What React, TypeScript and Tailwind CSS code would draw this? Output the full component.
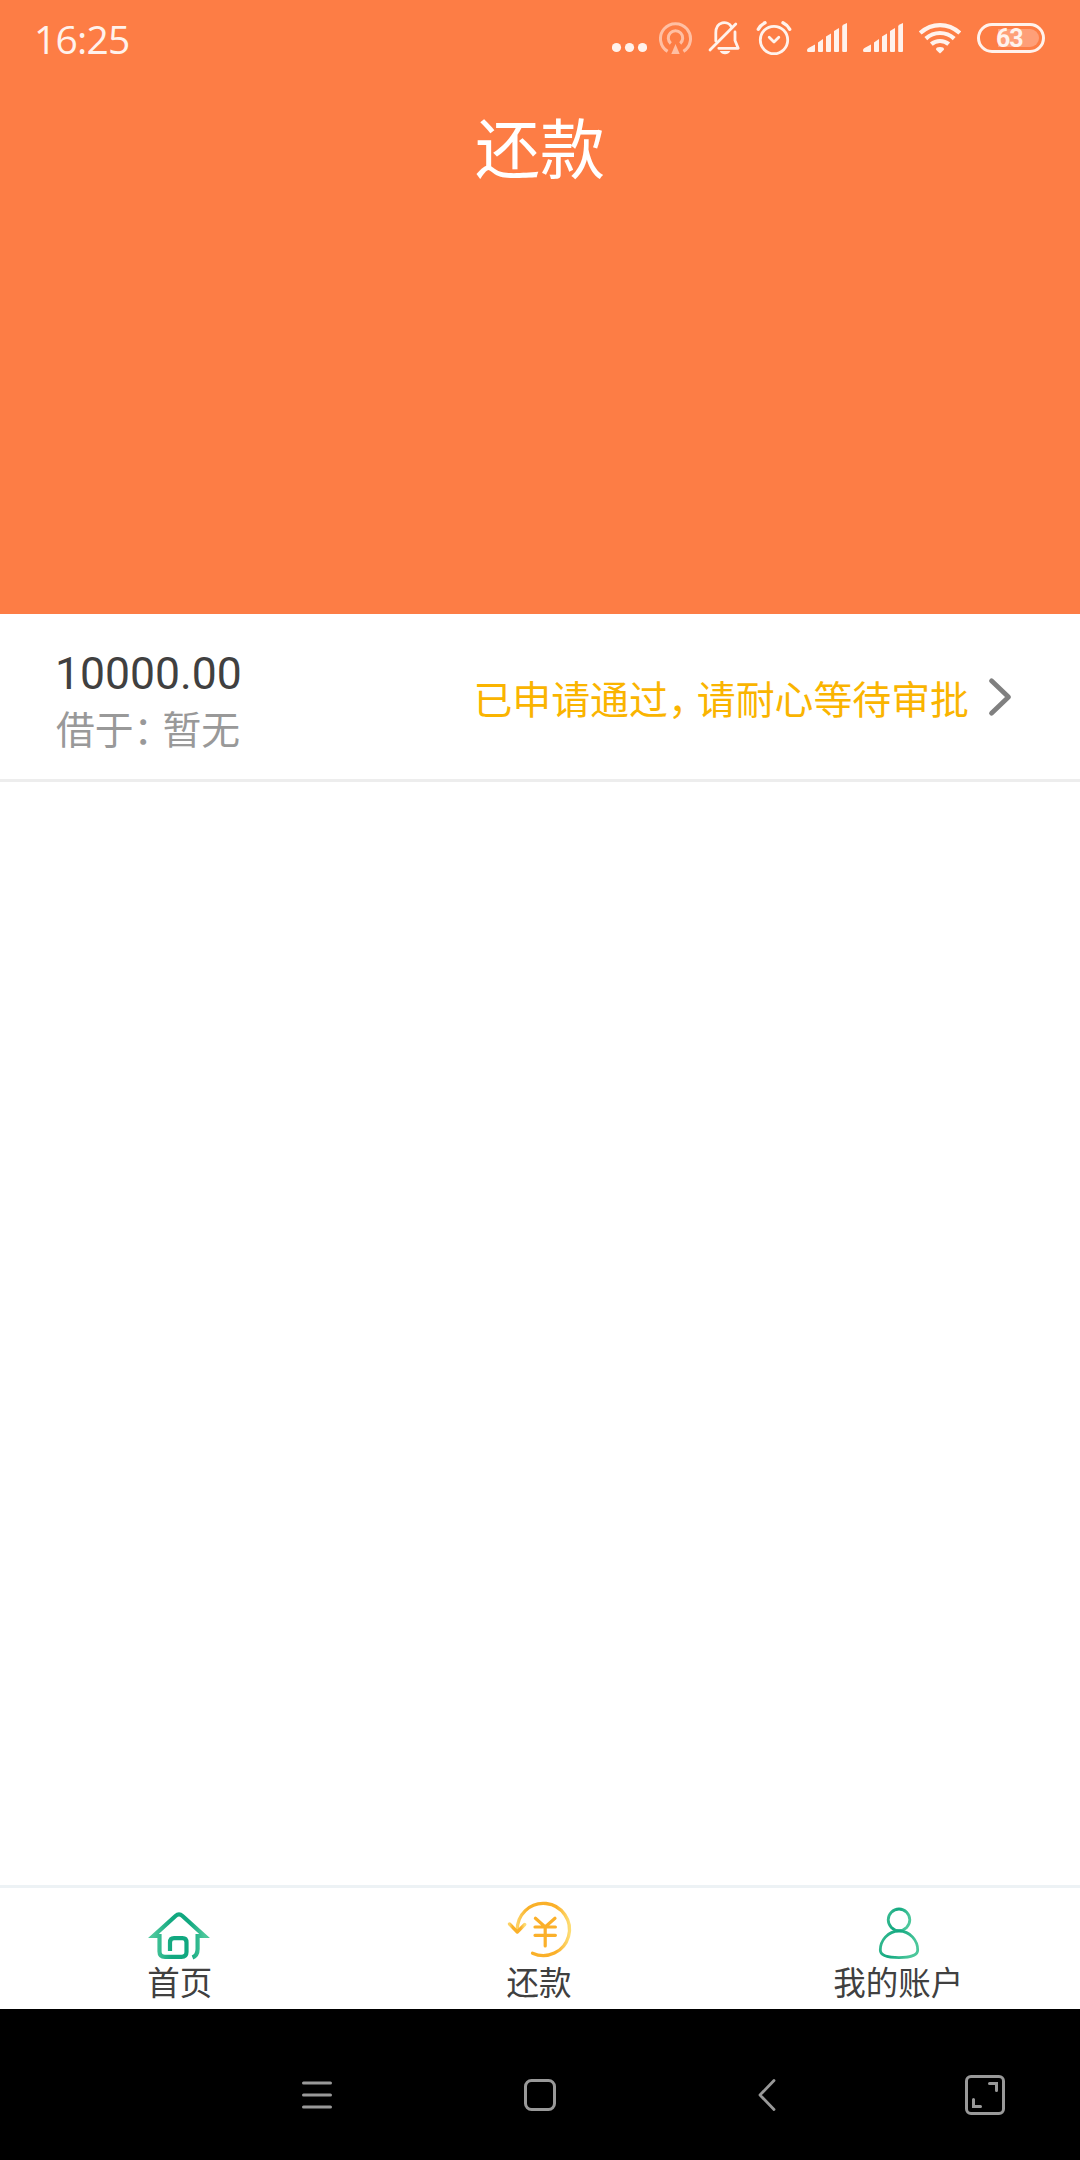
import type { ReactNode } from 'react'

interface IconProps {
  width: number
  children: ReactNode
  className?: string
}

// Status icons share the full bar height so they keep one baseline
function StatusIcon({ width, children, className }: IconProps) {
  return (
    <svg width={width} height={76} viewBox={`0 0 ${width} 76`} fill="none" className={className}>
      {children}
    </svg>
  )
}

function Signal({ className }: { className?: string }) {
  return (
    <StatusIcon width={40} className={className}>
      <g fill="#fff2ec">
        <path d="M0 50.5 Q0 48.8 1.5 48 L8 44.5 V51 Q8 52 7 52 H1.5 Q0 52 0 50.5Z" />
        <path d="M11 42.4 L16 39 V51 Q16 52 15 52 H12 Q11 52 11 51Z" />
        <path d="M19 36.4 L24 33.5 V51 Q24 52 23 52 H20 Q19 52 19 51Z" />
        <path d="M27 31 L32 28 V51 Q32 52 31 52 H28 Q27 52 27 51Z" />
        <path d="M35.2 25.8 Q37 24 40 23 V51 Q40 52 39 52 H36.2 Q35.2 52 35.2 51Z" />
      </g>
    </StatusIcon>
  )
}

function StatusBar() {
  return (
    <div className="flex h-[76px] items-center pl-[34px] pr-[35px]">
      <span className="pt-[2px] font-['Open_Sans',sans-serif] text-[39px] font-normal leading-[76px] tracking-[-0.8px] text-[#fff2ec]">
        16:25
      </span>
      <div className="ml-auto flex">
        <StatusIcon width={35}>
          <g fill="#fff2ec">
            <circle cx="4.5" cy="47.5" r="4.6" />
            <circle cx="17.5" cy="47.5" r="4.6" />
            <circle cx="30.5" cy="47.5" r="4.6" />
          </g>
        </StatusIcon>
        <StatusIcon width={34} className="ml-[12px]">
          <g stroke="#ffbfa3" strokeWidth="3">
            <path d="M8.6 51.4 A15 15 0 1 1 24.4 51.4" />
            <path d="M11.8 43.5 A7.2 7.2 0 1 1 21.2 43.5" />
          </g>
          <path d="M16.5 44 L20.7 54 H12.3Z" fill="#ffbfa3" />
        </StatusIcon>
        <StatusIcon width={33} className="ml-[15px]">
          <g stroke="#fff2ec" strokeWidth="2.8" strokeLinecap="round" strokeLinejoin="round">
            <path d="M2 50 L27.8 24" />
            <path d="M7.8 41 V33 C7.8 20.5 20 20.5 23.2 26.5" />
            <path d="M27 32 V40.5 L30.2 48.3 H10.8" />
          </g>
          <path d="M11.7 51 H22.3 Q20.5 54.2 17 54.2 T11.7 51Z" fill="#fff2ec" />
        </StatusIcon>
        <StatusIcon width={36} className="ml-[15px]">
          <g stroke="#fff2ec" strokeLinecap="round" strokeLinejoin="round">
            <circle cx="18" cy="40" r="13.7" strokeWidth="2.8" />
            <path d="M2.3 29.3 Q4.5 25 9 22.8 M27 22.8 Q31.5 25 33.7 29.3" strokeWidth="3.4" />
            <path d="M13.2 37.2 L18 42 L22.8 37.2" strokeWidth="2.8" />
          </g>
        </StatusIcon>
        <Signal className="ml-[15px]" />
        <Signal className="ml-[16px]" />
        <StatusIcon width={42} className="ml-[16px]">
          <g stroke="#fff2ec" strokeWidth="4.2">
            <path d="M1.2 33 Q10 25.1 21 25.1 T40.8 33" />
            <path d="M6.8 38.6 Q13 33 21 33 T35.2 38.6" />
            <path d="M12.3 44.2 Q16 41 21 41 T29.7 44.2" />
          </g>
          <path d="M17 49.4 Q17 47 21 47 T25 49.4 Q24.8 50 21 53.4 Q17.2 50 17 49.4Z" fill="#fff2ec" />
        </StatusIcon>
        <StatusIcon width={68} className="ml-[16px]">
          <path d="M21 29 H53 A9 9 0 0 1 53 47 H21Z" fill="#fe9f78" />
          <rect x="1.5" y="24.5" width="65" height="27" rx="13.5" stroke="#fff2ec" strokeWidth="3" />
          <text
            x="32.3"
            y="46.8"
            textAnchor="middle"
            fill="#fff2ec"
            className="font-[Roboto,sans-serif] text-[25px] font-bold tracking-[-1px]"
          >
            63
          </text>
        </StatusIcon>
      </div>
    </div>
  )
}

function HomeIcon() {
  return (
    <svg width="64" height="60" viewBox="0 0 64 60" fill="none">
      <defs>
        <linearGradient id="home" x1="0" y1="0.7" x2="1" y2="0.7">
          <stop offset="0" stopColor="#4cc79b" />
          <stop offset="0.35" stopColor="#12a880" />
          <stop offset="0.7" stopColor="#10a880" />
          <stop offset="1" stopColor="#4cc79b" />
        </linearGradient>
      </defs>
      <path
        d="M22 44 V35.5 Q22 31.2 26 31.2 H34.5 Q38.5 31.2 38.5 35.5 V45 Q38.5 49.8 33.5 49.8 H17 Q11.5 49.8 11.5 44.5 V29 H5.5 L27.5 9 Q31 5.8 34.5 9 L56.5 29 H49.6 V42 Q49.6 48.5 44.5 50.5"
        stroke="url(#home)"
        strokeWidth="4.2"
        strokeMiterlimit="8"
      />
    </svg>
  )
}

function RepayIcon() {
  return (
    <svg width="64" height="60" viewBox="0 0 64 60" fill="none">
      <defs>
        <linearGradient id="repay" x1="0" y1="0" x2="1" y2="0">
          <stop offset="0" stopColor="#fdd264" />
          <stop offset="0.2" stopColor="#f9b129" />
          <stop offset="0.75" stopColor="#fbb02a" />
          <stop offset="1" stopColor="#fddc72" />
        </linearGradient>
      </defs>
      <g stroke="url(#repay)" strokeWidth="3.3" strokeLinecap="round" strokeLinejoin="round">
        <path d="M10.3 24 A26.1 26.1 0 1 1 25.5 46.2" />
        <path d="M2.5 17 L10.3 25 L17.7 17.5" />
      </g>
      <path
        d="M28.4 11.2 L38.2 19.9 L48 11.2 M28 20 H48.4 M28 28.3 H48.4 M38.2 19.9 V39"
        stroke="#fbb02a"
        strokeWidth="3.2"
        strokeLinecap="round"
      />
    </svg>
  )
}

function UserIcon() {
  return (
    <svg width="40" height="60" viewBox="0 0 40 60" fill="none">
      <defs>
        <linearGradient id="user" x1="0" y1="0" x2="1" y2="0.3">
          <stop offset="0" stopColor="#3dbd93" />
          <stop offset="0.45" stopColor="#12a880" />
          <stop offset="1" stopColor="#4cc79b" />
        </linearGradient>
      </defs>
      <g stroke="url(#user)" strokeWidth="2.8">
        <circle cx="21" cy="12.8" r="10.8" />
        <path d="M21 24 C9.5 24 2.3 34 2.3 43 C2.3 48.7 11 50.6 21 50.6 C31 50.6 39.7 48.7 39.7 43 C39.7 34 32.5 24 21 24Z" />
      </g>
    </svg>
  )
}

const tabs = [
  { label: '首页', icon: <HomeIcon /> },
  { label: '还款', icon: <RepayIcon /> },
  { label: '我的账户', icon: <UserIcon /> },
]

export default function App() {
  return (
    <div className="flex h-[2160px] w-[1080px] flex-col overflow-hidden bg-white font-['Noto_Sans_CJK_SC',sans-serif] font-normal">
      <header className="h-[614px] shrink-0 bg-[#fd7d45]">
        <StatusBar />
        <h1 className="mt-[21px] text-center text-[65px] font-normal leading-[96px] text-white">还款</h1>
      </header>

      <main className="flex-1">
        <div className="flex h-[168px] items-center border-b-[3px] border-[#ededed] pl-[55px] pr-[68px]">
          <div className="flex flex-col pt-[9px]">
            <span className="font-[Roboto,sans-serif] text-[44.5px] leading-[52px] text-[#404040]">10000.00</span>
            <span className="pl-[1px] text-[38.8px] leading-[54px] text-[#999]">
              借于<span className="tracking-[-10px]">：</span>暂无
            </span>
          </div>
          <div className="ml-auto flex items-center">
            <span className="text-[38.9px] leading-[56px] text-[#fab400]">
              已申请通过<span className="tracking-[-10px]">，</span>请耐心等待审批
            </span>
            <svg width="24" height="40" viewBox="0 0 24 40" fill="none" className="ml-[19px]">
              <path
                d="M3.5 3.8 L20.5 20 L3.5 36.2"
                stroke="#808080"
                strokeWidth="4.8"
                strokeLinecap="round"
                strokeLinejoin="round"
              />
            </svg>
          </div>
        </div>
      </main>

      <nav className="flex h-[124px] shrink-0 border-t-[3px] border-[#edf2f5] pr-[2px]">
        {tabs.map((tab) => (
          <button key={tab.label} className="flex flex-1 flex-col items-center pt-[19px]">
            <span className="h-[54px] [&>svg]:overflow-visible">{tab.icon}</span>
            <span className="text-[32.5px] leading-[40px] text-[#404040]">{tab.label}</span>
          </button>
        ))}
      </nav>

      <footer className="flex h-[151px] shrink-0 items-center bg-black pl-[302px] pt-[21px]">
        <svg width="30" height="28" viewBox="0 0 30 28" stroke="#999" strokeWidth="3" strokeLinecap="round">
          <path d="M1.5 2 H28.5 M1.5 14 H28.5 M1.5 26 H28.5" />
        </svg>
        <svg width="32" height="32" viewBox="0 0 32 32" fill="none" className="ml-[192px]">
          <rect x="1.5" y="1.5" width="29" height="29" rx="6" stroke="#999" strokeWidth="3" />
        </svg>
        <svg width="18" height="32" viewBox="0 0 18 32" fill="none" className="ml-[202px]">
          <path d="M16 1.5 L2 16 L16 30.5" stroke="#999" strokeWidth="2.8" strokeLinecap="round" strokeLinejoin="round" />
        </svg>
        <svg width="40" height="40" viewBox="0 0 40 40" fill="none" className="ml-[189px]">
          <g stroke="#999" strokeWidth="3">
            <rect x="1.5" y="1.5" width="37" height="37" rx="4.5" />
            <path d="M24.5 8.5 H31.5 V15.5 M8.5 24.5 V31.5 H15.5" strokeLinecap="round" />
          </g>
        </svg>
      </footer>
    </div>
  )
}
